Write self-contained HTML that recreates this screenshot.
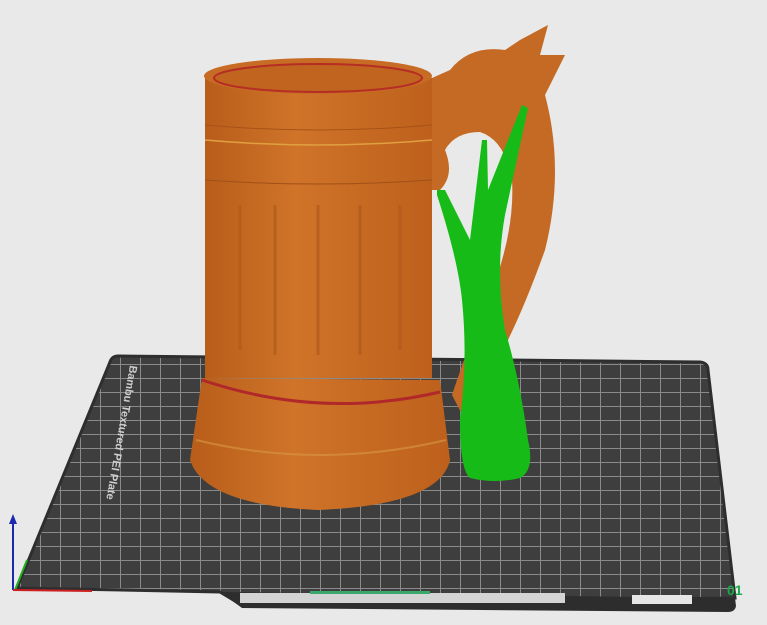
<!DOCTYPE html>
<html><head><style>
html,body{margin:0;padding:0;background:#e9e9e9;width:767px;height:625px;overflow:hidden}
</style></head><body>
<svg width="767" height="625" viewBox="0 0 767 625" xmlns="http://www.w3.org/2000/svg">
<defs>
<pattern id="grid" width="20" height="14" patternUnits="userSpaceOnUse">
<rect width="20" height="14" fill="#3e3e3e"/>
<path d="M0 0.5H20M0.5 0V14" stroke="#8a8a8a" stroke-width="1"/>
</pattern>
<linearGradient id="mug" x1="0" x2="1">
<stop offset="0" stop-color="#b85d1a"/><stop offset="0.4" stop-color="#cf7429"/><stop offset="1" stop-color="#bd601c"/>
</linearGradient>
</defs>
<!-- bed -->
<path d="M118 356 L700 362 Q708 363 708 370 L735 598 L240 604 L220 592 L17 588 L110 362 Q112 356 118 356Z" fill="url(#grid)"/>
<path d="M118 356 L700 362 Q708 363 708 370 L735 598 L240 604 L220 592 L17 588 L110 362 Q112 356 118 356Z" fill="none" stroke="#2e2e2e" stroke-width="3"/>
<path d="M220 592 L735 598 L736 606 Q735 612 728 612 L242 608 Z" fill="#2d2d2d"/>
<rect x="240" y="593" width="325" height="10" fill="#d4d4d4"/>
<rect x="310" y="591" width="120" height="3" fill="#3aa86a"/>
<rect x="632" y="595" width="60" height="9" fill="#e6e6e6"/>
<text x="130" y="365" transform="rotate(100 130 365)" font-family="Liberation Sans,sans-serif" font-weight="bold" font-size="11" fill="#cfcfcf">Bambu Textured PEI Plate</text>
<text x="727" y="595" font-family="Liberation Sans,sans-serif" font-weight="bold" font-size="14" fill="#1aa84a">01</text>
<!-- axes -->
<line x1="13" y1="590" x2="13" y2="520" stroke="#1a2ab0" stroke-width="2"/>
<path d="M9 524 L13 514 L17 524Z" fill="#1a2ab0"/>
<line x1="15" y1="590" x2="27" y2="560" stroke="#20b020" stroke-width="2"/>
<line x1="13" y1="590" x2="92" y2="591" stroke="#cc2020" stroke-width="2"/>
<!-- handle -->
<path d="M432 78 L450 70 Q470 45 505 50 L520 40 L548 25 L540 55 L565 55 L545 95 Q565 170 545 250 Q520 320 495 365 L465 420 L452 395 Q470 340 492 290 Q515 230 512 180 Q505 140 480 132 Q455 132 445 150 Q455 175 440 190 L432 190Z" fill="#c46a24"/>
<!-- mug body -->
<path d="M205 78 L432 78 L432 378 L205 378 Z" fill="url(#mug)"/>
<ellipse cx="318" cy="76" rx="114" ry="18" fill="#c86c25"/>
<ellipse cx="318" cy="78" rx="104" ry="14" fill="#c0641f" stroke="#b52d25" stroke-width="2"/>
<path d="M205 140 Q318 150 432 140" stroke="#e0a040" stroke-width="1.5" fill="none"/>
<path d="M205 125 Q318 135 432 125" stroke="#a85218" stroke-width="1" fill="none"/>
<path d="M205 180 Q318 188 432 180" stroke="#a05018" stroke-width="1" fill="none"/>
<g stroke="#b05a1c" stroke-width="3" opacity="0.7">
<line x1="240" y1="205" x2="240" y2="350"/><line x1="275" y1="205" x2="275" y2="355"/>
<line x1="318" y1="205" x2="318" y2="355"/><line x1="360" y1="205" x2="360" y2="355"/>
<line x1="400" y1="205" x2="400" y2="350"/></g>
<!-- base -->
<path d="M202 378 L440 380 L450 460 Q440 505 318 510 Q205 505 190 460 Z" fill="url(#mug)"/>
<path d="M202 380 Q320 420 440 392" stroke="#b0282a" stroke-width="3" fill="none"/>
<path d="M196 440 Q320 470 446 440" stroke="#d89a45" stroke-width="2" fill="none" opacity="0.6"/>
<!-- green support -->
<path d="M437 190 L445 190 Q460 220 470 240 L482 140 L487 140 L488 190 L522 105 L528 108 L505 215 Q495 270 505 330 Q520 380 528 440 Q535 470 520 478 Q495 484 470 478 Q460 470 460 420 Q468 360 462 300 Q458 260 437 195Z" fill="#17bb17"/>
</svg>
</body></html>
